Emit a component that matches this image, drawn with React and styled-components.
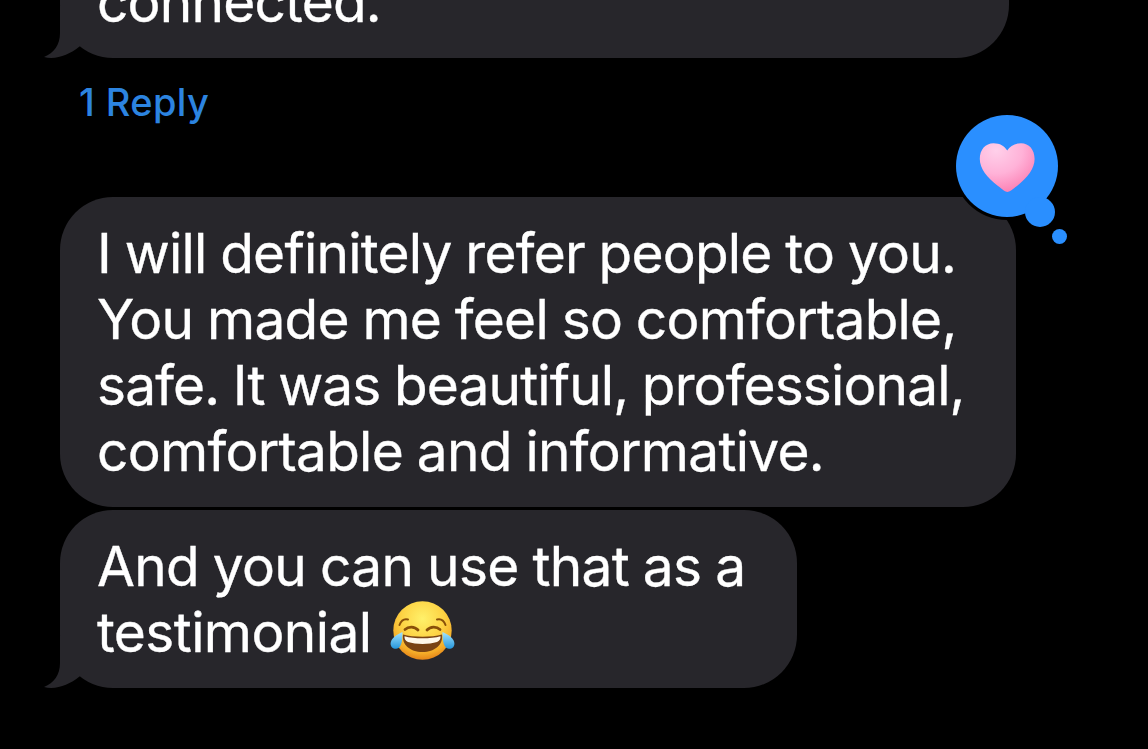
import React from "react"
import styled, { createGlobalStyle } from "styled-components"

const App = () => {
  return (
    <>
      <GlobalStyle />
      <Screen>
        <Bubble $width={949} $cropped>
          <Line $spacing={-0.8}>connected.</Line>
          <Tail />
        </Bubble>
        <Replies>1 Reply</Replies>
        <Bubble $width={956}>
          <Line $spacing={-0.78}>I will definitely refer people to you.</Line>
          <Line $spacing={-0.77}>You made me feel so comfortable,</Line>
          <Line $spacing={-0.88}>safe. It was beautiful, professional,</Line>
          <Line $spacing={-0.73}>comfortable and informative.</Line>
          <Reaction />
        </Bubble>
        <Bubble $width={737} $grouped>
          <Line $spacing={-0.68}>And you can use that as a</Line>
          <Line $spacing={-0.6}>
            testimonial <JoyEmoji />
          </Line>
          <Tail />
        </Bubble>
      </Screen>
    </>
  )
}

export default App

const Tail = () => (
  <TailShape viewBox="0 0 40 52" aria-hidden="true">
    <path d="M16 0V27C16 39 10 47 0 51C12 54 25 49 35.5 40.5L40 36V0Z" />
  </TailShape>
)

const Reaction = () => (
  <ReactionShape viewBox="0 0 120 138" role="img" aria-label="Heart">
    <defs>
      <radialGradient id="heart" cx="0.3" cy="0.15" r="0.95">
        <stop offset="0" stopColor="#ffd0ea" />
        <stop offset="0.5" stopColor="#ffb2d8" />
        <stop offset="1" stopColor="#fb78ae" />
      </radialGradient>
    </defs>
    <g fill="#000">
      <circle cx="57" cy="56" r="54" />
      <circle cx="90" cy="102" r="17" />
    </g>
    <g fill="#2a8fff">
      <circle cx="57" cy="56" r="51" />
      <circle cx="90" cy="102" r="15" />
      <circle cx="109.5" cy="126.5" r="7.5" />
    </g>
    <path
      fill="url(#heart)"
      d="M57.4 82C55.5 82 52 79 48 76C37 67.5 29.8 58.5 29.8 49C29.8 39.5 35.5 33.2 43.5 33.2C50 33.2 54.5 36 57.2 40.5C60 36 64.5 33.2 71 33.2C79 33.2 84.6 39.5 84.6 49C84.6 58.5 77.5 67.5 67 76C63 79 59.3 82 57.4 82Z"
    />
  </ReactionShape>
)

const JoyEmoji = () => (
  <Emoji viewBox="0 0 66 62" role="img" aria-label="Face with tears of joy">
    <defs>
      <radialGradient id="face" cx="0.5" cy="0.3" r="0.72">
        <stop offset="0" stopColor="#fff16a" />
        <stop offset="0.5" stopColor="#fdd344" />
        <stop offset="0.82" stopColor="#f5ac28" />
        <stop offset="1" stopColor="#e27d16" />
      </radialGradient>
      <linearGradient id="tear" x1="0" y1="0" x2="0" y2="1">
        <stop offset="0" stopColor="#a4e5ff" />
        <stop offset="1" stopColor="#2596dc" />
      </linearGradient>
    </defs>
    <circle cx="32.5" cy="30.5" r="29.2" fill="url(#face)" />
    <g fill="none" stroke="#895009" strokeLinecap="round">
      <path d="M9.5 25C11 21 14 18.5 18 19.5" strokeWidth="2" />
      <path d="M55.5 25C54 21 51 18.5 47 19.5" strokeWidth="2" />
      <path d="M15 29.5C18.5 26.3 24.5 26.2 28 30" strokeWidth="2.8" />
      <path d="M50 29.5C46.5 26.3 40.5 26.2 37 30" strokeWidth="2.8" />
    </g>
    <path
      fill="#794313"
      d="M13 34.5C23 37.5 42 37.5 52 34.5C53.5 44.5 45 52 32.5 52C20 52 11.5 44.5 13 34.5Z"
    />
    <path
      fill="#fff8e9"
      d="M14.5 36.2C24 39 41 39 50.5 36.2C50.8 38.8 49.5 41 47 42C39 44.5 26 44.5 18 42C15.5 41 14.2 38.8 14.5 36.2Z"
    />
    <path
      fill="url(#tear)"
      d="M12.5 32C5.5 35 0.6 39 0.6 43.7C0.6 47 3 48.9 6.2 48.7C11.5 48.3 12.5 41 12.5 32Z"
    />
    <path
      fill="url(#tear)"
      d="M52.5 32C59.5 35 64.4 39 64.4 43.7C64.4 47 62 48.9 58.8 48.7C53.5 48.3 52.5 41 52.5 32Z"
    />
  </Emoji>
)

const GlobalStyle = createGlobalStyle`
  body {
    margin: 0;
    background: #000;
  }
`

const Screen = styled.main`
  display: flex;
  flex-direction: column;
  align-items: flex-start;
  box-sizing: border-box;
  height: 749px;
  padding-left: 60px;
  overflow: hidden;
  background: #000;
  color: #fff;
  font-family: Inter, "Liberation Sans", sans-serif;
`

const Bubble = styled.section`
  position: relative;
  box-sizing: border-box;
  flex: none;
  width: ${props => props.$width}px;
  margin-top: ${props => (props.$cropped ? -54 : props.$grouped ? 3 : 0)}px;
  padding: 23px 37px;
  border-radius: 53px;
  background: #27262b;
`

const Line = styled.div`
  height: 66px;
  font-size: 55px;
  line-height: 66px;
  letter-spacing: ${props => props.$spacing}px;
  word-spacing: -1px;
  white-space: nowrap;
  -webkit-text-stroke: 0.35px #fff;
`

const Replies = styled.div`
  height: 94px;
  margin-bottom: 45px;
  padding-left: 19px;
  color: #2c84e0;
  font-size: 38px;
  font-weight: 500;
  line-height: 88px;
  letter-spacing: 0.4px;
`

const TailShape = styled.svg`
  position: absolute;
  bottom: 0;
  left: -16px;
  width: 40px;
  height: 52px;
  fill: #27262b;
`

const ReactionShape = styled.svg`
  position: absolute;
  top: -87px;
  right: -54px;
  width: 120px;
  height: 138px;
`

const Emoji = styled.svg`
  width: 66px;
  height: 62px;
  margin-left: 5px;
  vertical-align: -10px;
`
